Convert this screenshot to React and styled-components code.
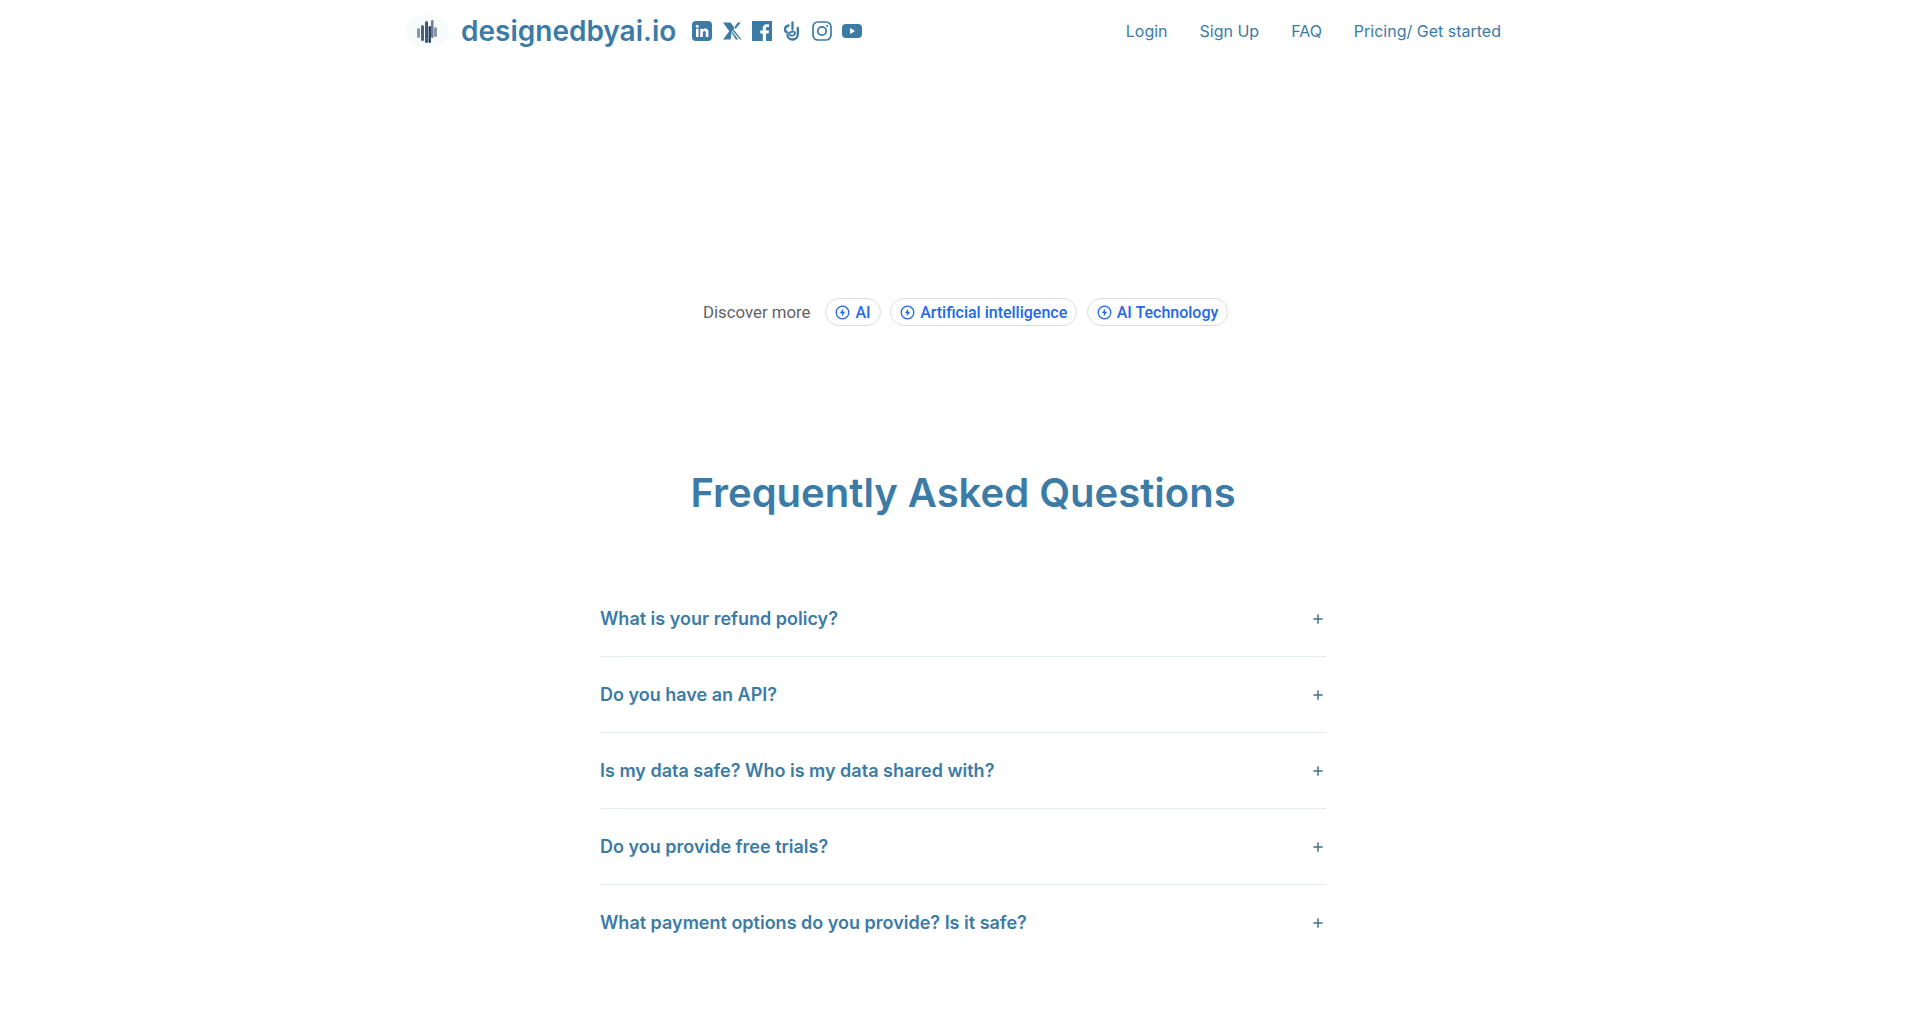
import React from "react";
import styled, { createGlobalStyle } from "styled-components";
import { FaPlus } from "react-icons/fa6";

const Global = createGlobalStyle`
  html, body { margin: 0; padding: 0; background: #fff; }
  body { font-family: Inter, "Liberation Sans", sans-serif; color: #3b7ba6; }
  * { box-sizing: border-box; }
`;
const Page = styled.div`
  width: 1930px;
  height: 1012px;
  overflow: hidden;
  background: #fff;
`;
const Header = styled.header`
  width: 1120px;
  height: 62px;
  margin-left: 405px;
  display: flex;
  align-items: center;
`;
const Brand = styled.a`
  display: flex;
  align-items: center;
`;
const LogoBadge = styled.span`
  width: 44px;
  height: 33px;
  border-radius: 50%;
  background: #f7fbfb;
  display: flex;
  align-items: center;
  justify-content: center;
`;
const BrandName = styled.span`
  margin-left: 12px;
  font-size: 28px;
  font-weight: 600;
  color: #3b7ba6;
  white-space: nowrap;
`;
const Socials = styled.div`
  display: flex;
  align-items: center;
  margin-left: 16px;
  color: #3b7ba6;
  gap: 10px;
`;
const Nav = styled.nav`
  margin-left: auto;
  display: flex;
  gap: 32px;
  padding-right: 24px;
`;
const NavLink = styled.a`
  font-size: 16px;
  color: #3b7ba6;
`;
const Discover = styled.div`
  margin-top: 236px;
  margin-left: 703px;
  display: flex;
  align-items: center;
  font-family: Roboto, sans-serif;
  height: 28px;
`;
const DiscoverLabel = styled.span`
  font-size: 16.8px;
  color: #5f6368;
  margin-right: 15px;
`;
const Chip = styled.a`
  height: 28px;
  border: 1px solid #dadce0;
  border-radius: 14px;
  padding: 0 9px;
  margin-right: 9.500px;
  display: flex;
  align-items: center;
  gap: 5px;
  font-size: 16px;
  font-weight: 500;
  color: #2268e8;
`;
const FaqSection = styled.section`
  width: 726px;
  margin-left: 600px;
`;
const Title = styled.h2`
  margin: 143px -100px 0;
  font-size: 40px;
  line-height: 48px;
  font-weight: 600;
  text-align: center;
  color: #3b7ba6;
`;
const List = styled.div`
  margin-top: 64px;
`;
const Row = styled.div`
  height: 76px;
  display: flex;
  align-items: center;
  justify-content: space-between;
  font-size: 18px;
  font-weight: 600;
  color: #3b7ba6;
  border-bottom: 1px solid ${(p) => (p.$last ? "transparent" : "#e5eced")};
`;
const Plus = styled.span`
  display: flex;
  margin: 1px 2px 0 0;
  color: #3f7286;
`;

const LogoMark = () => (
  <svg width="22" height="27" viewBox="0 0 22 27" style={{ filter: "blur(.45px)" }}>
    <g fill="#2b4666">
      <rect x="1" y="10" width="3" height="10" rx="1.500" opacity=".55" />
      <rect x="5" y="7" width="3" height="16" rx="1.500" opacity=".85" />
      <rect x="9" y="3" width="3" height="22" rx="1.500" opacity=".9" />
      <rect x="12.500" y="8" width="2.500" height="17" rx="1.200" />
      <rect x="15" y="2" width="2.500" height="18" rx="1.200" opacity=".7" />
      <rect x="18" y="9" width="3" height="10" rx="1.500" opacity=".55" />
    </g>
  </svg>
);
const LinkedinMark = () => (
  <svg width="20" height="20" viewBox="0 0 20 20">
    <rect width="20" height="20" rx="4" fill="currentColor" />
    <g fill="#fff">
      <circle cx="5.300" cy="5.200" r="1.500" />
      <rect x="4" y="7.800" width="2.600" height="8.200" />
      <path d="M8.200 7.800h2.500v1.200c.6-.9 1.600-1.400 2.700-1.400 2.200 0 3 1.400 3 3.600V16h-2.600v-4.300c0-1.100-.4-1.800-1.400-1.800s-1.600.8-1.600 1.900V16H8.200z" />
    </g>
  </svg>
);
const XMark = () => (
  <svg width="20" height="20" viewBox="0 0 20 20" fill="currentColor">
    <path d="M1 1.500h7.500l4.200 5.500-3 4L8.500 18.500H1l6.300-8.300z" />
    <path d="M12.600 6 15.800 1.500h3l-5.200 6.400z" />
    <path d="M10.800 10 11.700 8.800 19.500 18.500h-1.500z" />
    <path d="M9.800 12 10.500 11 16.300 18.500h-2.500z" />
  </svg>
);
const FacebookMark = () => (
  <svg width="20" height="20" viewBox="0 0 20 20">
    <path
      fillRule="evenodd"
      fill="currentColor"
      d="M0 0h20v20h-6v-7.600h2.600l.4-3h-3V7.500c0-.9.300-1.500 1.500-1.500H17V3.300c-.3 0-1.200-.1-2.300-.1-2.300 0-3.900 1.400-3.900 4v2.200H8.200v3h2.600V20H0z"
    />
  </svg>
);
const HandMark = () => (
  <svg width="20" height="20" viewBox="0 0 20 20" fill="none" stroke="currentColor" strokeWidth="2.300" strokeLinecap="round">
    <path d="M10.500 1.500v7" />
    <path d="M6.500 4.500C3.800 5 3 6.700 3 8.500 3 10.200 4 11.300 5.500 11.500" />
    <path d="M15.800 7v6c0 3.200-2.300 5.500-5.300 5.500S5.500 16.500 5.500 14" />
    <path d="M7 12.500c2-2.500 6-2.500 6-.2s-3.500 3-5 1.700" strokeWidth="1.800" />
  </svg>
);
const InstagramMark = () => (
  <svg width="20" height="20" viewBox="0 0 20 20" fill="none" stroke="currentColor">
    <rect x="1" y="1" width="18" height="18" rx="5" strokeWidth="1.700" />
    <circle cx="10" cy="10" r="4.200" strokeWidth="1.800" />
    <circle cx="15.200" cy="4.800" r="1.100" fill="currentColor" stroke="none" />
  </svg>
);
const YoutubeMark = () => (
  <svg width="20" height="20" viewBox="0 0 20 20">
    <rect x="0" y="3" width="20" height="14" rx="4" fill="currentColor" />
    <path d="M8 7l5.200 3L8 13z" fill="#fff" />
  </svg>
);

const questions = [
  "What is your refund policy?",
  "Do you have an API?",
  "Is my data safe? Who is my data shared with?",
  "Do you provide free trials?",
  "What payment options do you provide? Is it safe?",
];
const chips = ["AI", "Artificial intelligence", "AI Technology"];

const Spark = () => (
  <svg width="15" height="15" viewBox="0 0 15 15" fill="none">
    <circle cx="7.500" cy="7.500" r="6.300" stroke="#2268e8" strokeWidth="1.300" />
    <path d="M8.300 3.500 4.800 8.300h2.300l-.4 3.200 3.500-4.800H7.900z" fill="#2268e8" />
  </svg>
);

export default function App() {
  return (
    <Page>
      <Global />
      <Header>
        <Brand>
          <LogoBadge><LogoMark /></LogoBadge>
          <BrandName>designedbyai.io</BrandName>
        </Brand>
        <Socials>
          <LinkedinMark />
          <XMark />
          <FacebookMark />
          <HandMark />
          <InstagramMark />
          <YoutubeMark />
        </Socials>
        <Nav>
          <NavLink>Login</NavLink>
          <NavLink>Sign Up</NavLink>
          <NavLink>FAQ</NavLink>
          <NavLink>Pricing/ Get started</NavLink>
        </Nav>
      </Header>
      <Discover>
        <DiscoverLabel>Discover more</DiscoverLabel>
        {chips.map((c) => (
          <Chip key={c}><Spark />{c}</Chip>
        ))}
      </Discover>
      <FaqSection>
        <Title>Frequently Asked Questions</Title>
        <List>
          {questions.map((q, i) => (
            <Row key={q} $last={i === questions.length - 1}>
              {q}
              <Plus><FaPlus size={12} /></Plus>
            </Row>
          ))}
        </List>
      </FaqSection>
    </Page>
  );
}
